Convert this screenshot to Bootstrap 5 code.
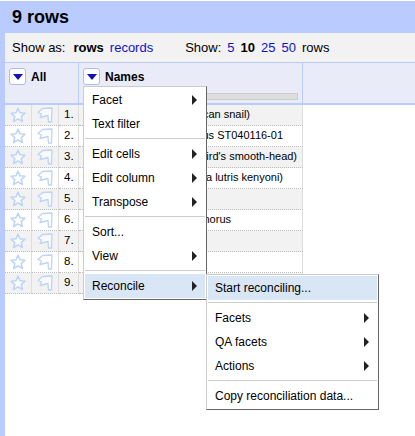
<!DOCTYPE html>
<html lang="en">
<head>
  <meta charset="UTF-8" />
  <title>9 rows</title>
  <link href="https://cdn.jsdelivr.net/npm/bootstrap@5.3.2/dist/css/bootstrap.min.css" rel="stylesheet" />
  <style>
    body {
      background-color: #fff;
      font-family: "Liberation Sans", Arial, sans-serif;
      font-size: 12px;
      color: #000;
      margin: 0;
      height: 436px;
      overflow: hidden;
      position: relative;
    }
    a { color: #11c; text-decoration: none; }
    .page-wrap { margin-top: 1px; height: 435px; border-left: 5px solid #b9cbff; }
    .summary-bar { background-color: #b9cbff; height: 32px; padding: 0 7px; }
    .summary-bar h1 { font-size: 18px; font-weight: 700; line-height: 32px; margin: 0; }
    .view-bar { background-color: #f2f2f2; height: 29px; padding: 0 7px; font-size: 13px; line-height: 29px; gap: 6px; }
    .view-bar b { font-weight: 700; }
    .rows-label { margin-left: 2px; }
    .show-label { margin-left: 26px; }
    .data-table { border-collapse: separate; border-spacing: 0; width: 410px; table-layout: fixed; }
    .data-table th { background-color: #e9ecf8; height: 43px; vertical-align: top; padding: 5px 4px 0; border-top: 1px solid #b9cbff; border-right: 1px solid #b9cbff; border-bottom: 2px solid #b9cbff; font-size: 12px; }
    .data-table th:last-child { border-right: 0; }
    .data-table td { height: 21px; padding: 0; border-right: 1px solid #ddd; border-bottom: 1px dotted #bbb; vertical-align: middle; line-height: 18px; font-size: 11px; white-space: nowrap; }
    .data-table td.spare-cell { border: 0; background: #fff !important; }
    .data-table tr.odd-row td { background-color: #f2f2f2; }
    .col-star, .col-flag { width: 27px; }
    .col-num { width: 20px; }
    .col-name { width: 224px; }
    .data-table td.num-cell { padding: 0 0 2px 5px; font-size: 11.5px; }
    .data-table td.name-cell { padding-bottom: 2px; }
    .data-table td svg { display: block; margin: 0 auto; }
    .head-cell { gap: 5px; line-height: 19px; }
    .drop-btn { width: 17px; height: 17px; background: #fff; border: 1px solid #aabcf2; border-radius: 3px; display: flex; align-items: center; justify-content: center; flex: none; }
    .drop-btn::after { content: ""; border-left: 5px solid transparent; border-right: 5px solid transparent; border-top: 6px solid #1111bb; }
    .name-bar { height: 7px; background: #ddd; border: 1px solid #ccc; margin: 6px 0 0 0; }
    .pop-menu { position: absolute; background: #fff; border: 1px solid #ccc; border-right: 1px solid #666; border-bottom: 1px solid #666; padding: 1px; }
    .menu-main { left: 83px; top: 86px; width: 124px; }
    .menu-sub { left: 206px; top: 274px; width: 173px; }
    .menu-row { height: 24px; line-height: 24px; padding: 0 7px; display: flex; justify-content: space-between; align-items: center; }
    .menu-row.hot { background-color: #d9e6f6; }
    .menu-row.has-sub::after { content: ""; border-top: 5px solid transparent; border-bottom: 5px solid transparent; border-left: 5px solid #222; margin-right: 1px; }
    .menu-sep { height: 1px; background: #ccc; margin: 2px 0 3px; }
  </style>
</head>
<body>
  <div class="page-wrap">
    <div class="summary-bar"><h1>9 rows</h1></div>
    <div class="view-bar d-flex">
      <span>Show as:</span>
      <b class="rows-label">rows</b>
      <a href="#">records</a>
      <span class="show-label">Show:</span>
      <a href="#">5</a>
      <b>10</b>
      <a href="#">25</a>
      <a href="#">50</a>
      <span>rows</span>
    </div>
    <table class="data-table">
      <colgroup>
        <col class="col-star" /><col class="col-flag" /><col class="col-num" /><col class="col-name" /><col />
      </colgroup>
      <thead>
        <tr>
          <th colspan="3"><div class="head-cell d-flex"><span class="drop-btn"></span>All</div></th>
          <th><div class="head-cell d-flex"><span class="drop-btn"></span>Names</div><div class="name-bar"></div></th>
          <th></th>
        </tr>
      </thead>
      <tbody id="rows"></tbody>
    </table>
  </div>

  <div class="pop-menu menu-main">
    <div class="menu-row has-sub">Facet</div>
    <div class="menu-row">Text filter</div>
    <div class="menu-sep"></div>
    <div class="menu-row has-sub">Edit cells</div>
    <div class="menu-row has-sub">Edit column</div>
    <div class="menu-row has-sub">Transpose</div>
    <div class="menu-sep"></div>
    <div class="menu-row">Sort...</div>
    <div class="menu-row has-sub">View</div>
    <div class="menu-sep"></div>
    <div class="menu-row hot has-sub">Reconcile</div>
  </div>

  <div class="pop-menu menu-sub">
    <div class="menu-row hot">Start reconciling...</div>
    <div class="menu-sep"></div>
    <div class="menu-row has-sub">Facets</div>
    <div class="menu-row has-sub">QA facets</div>
    <div class="menu-row has-sub">Actions</div>
    <div class="menu-sep"></div>
    <div class="menu-row">Copy reconciliation data...</div>
  </div>

  <script src="https://cdn.jsdelivr.net/npm/bootstrap@5.3.2/dist/js/bootstrap.bundle.min.js"></script>
  <script>
    // only the part of each name that shows past the open menu; gap = px from text end to column edge
    const names = [
      { text: "can snail)", gap: 52 },
      { text: "us ST040116-01", gap: 19 },
      { text: "ird's smooth-head)", gap: 5 },
      { text: "a lutris kenyoni)", gap: 19 },
      { text: "", gap: 0 },
      { text: "horus", gap: 71 },
      { text: "", gap: 0 },
      { text: "", gap: 0 },
      { text: "", gap: 0 }
    ];
    const star = '<svg width="18" height="18" viewBox="0 0 18 18"><path d="M9 2.200l2 4.600 5 .5-3.800 3.300 1.200 4.900L9 12.900l-4.400 2.600 1.200-4.900L2 7.300l5-.5z" fill="#fff" fill-opacity=".5" stroke="#bcd4f8" stroke-width="1.500" stroke-linejoin="round"/></svg>';
    const flag = '<svg width="18" height="18" viewBox="0 0 18 18"><path d="M2 6.500L6.500 2.500 16 2c0 3-.5 8-.5 14L12.500 16 12 9.500 4 11.500 5.500 8z" fill="#fff" fill-opacity=".5" stroke="#bcd4f8" stroke-width="1.300" stroke-linejoin="round"/></svg>';
    let html = "";
    names.forEach(function (name, i) {
      html += '<tr class="' + (i % 2 === 0 ? "odd-row" : "") + '">' +
        '<td>' + star + '</td>' +
        '<td>' + flag + '</td>' +
        '<td class="num-cell">' + (i + 1) + '.</td>' +
        '<td class="name-cell text-end" style="padding-right:' + name.gap + 'px">' + name.text + '</td>' +
        '<td class="spare-cell"></td></tr>';
    });
    document.getElementById("rows").innerHTML = html;
  </script>
</body>
</html>
